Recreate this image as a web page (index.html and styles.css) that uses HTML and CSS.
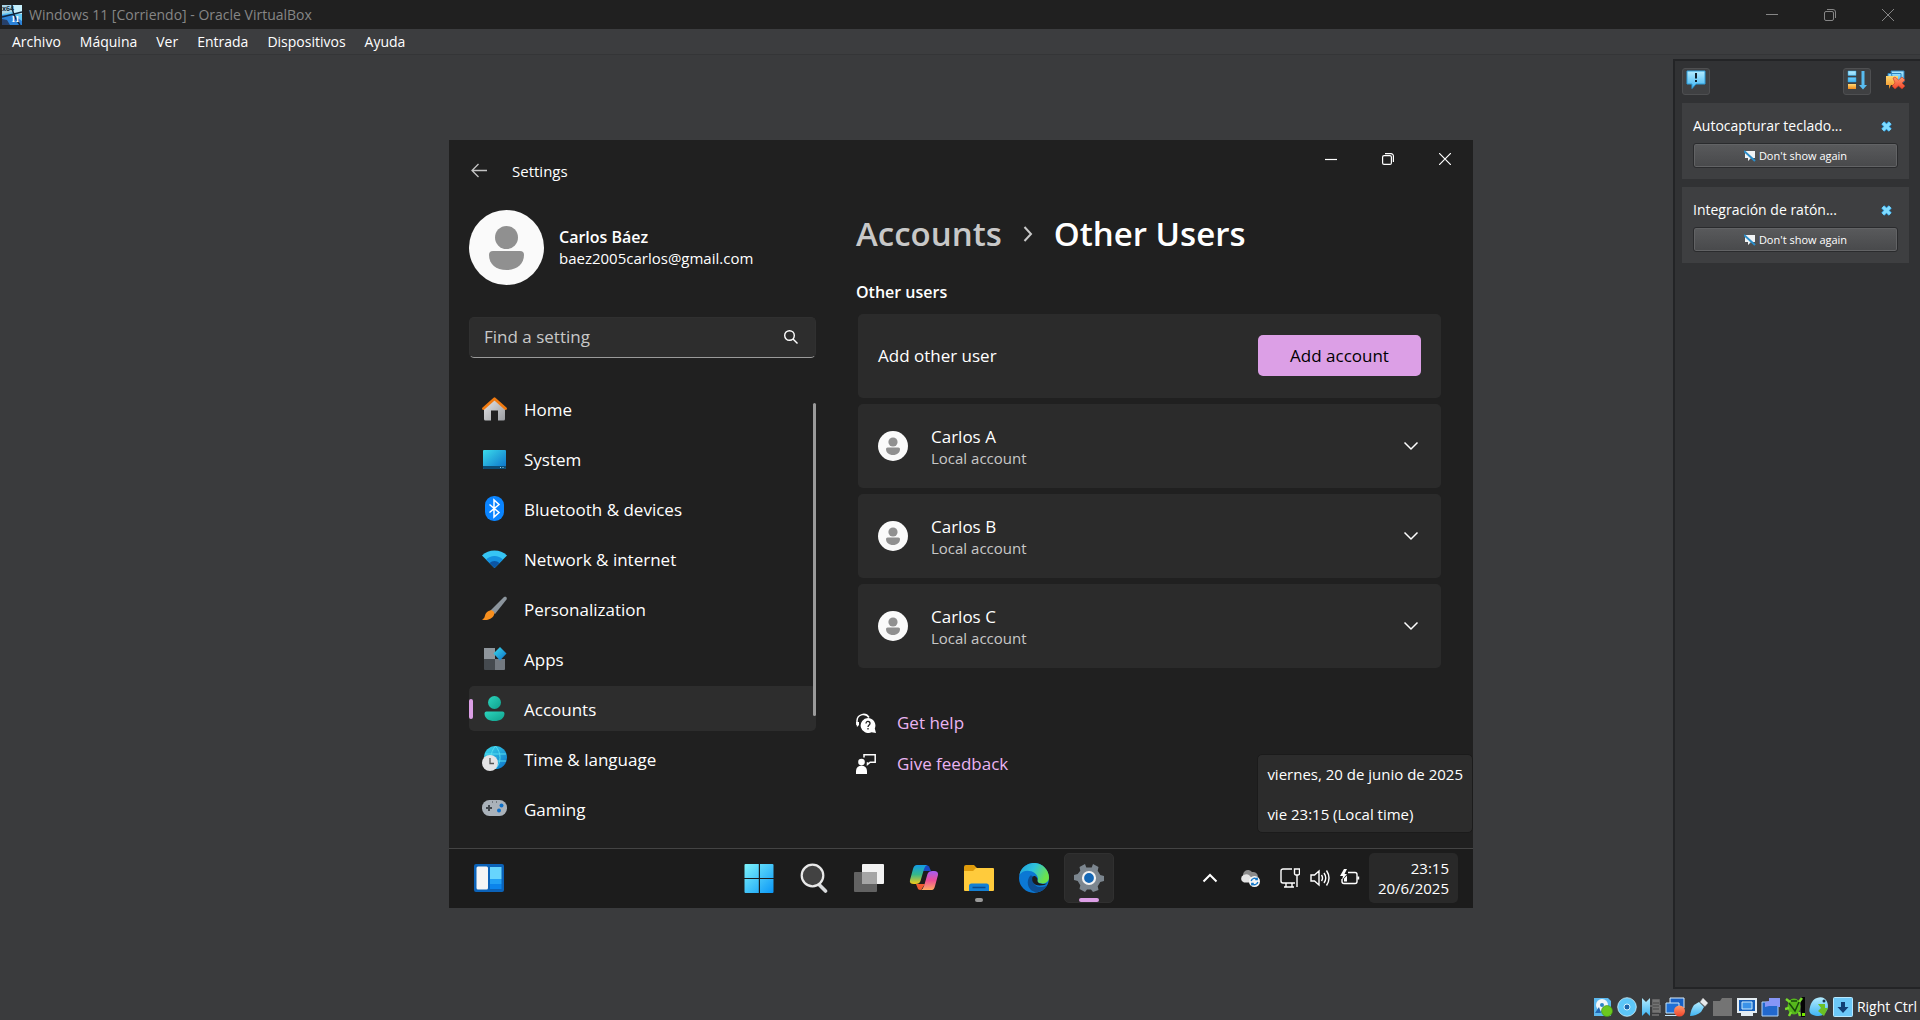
FILE: index.html
```html
<!DOCTYPE html>
<html lang="es">
<head>
<meta charset="utf-8">
<meta name="viewport" content="width=device-width, initial-scale=1">
<title>Windows 11 [Corriendo] - Oracle VirtualBox</title>
<link rel="stylesheet" href="styles.css">
</head>
<body>
<svg class="defs" aria-hidden="true">
  <defs>
    <linearGradient id="sky" x1="0" y1="0" x2="0" y2="1"><stop offset="0" stop-color="#b4ecff"/><stop offset="1" stop-color="#3fb4f2"/></linearGradient>
    <linearGradient id="blue" x1="0" y1="0" x2="1" y2="1"><stop offset="0" stop-color="#3bdcec"/><stop offset="1" stop-color="#0b6fc8"/></linearGradient>
    <linearGradient id="grey" x1="0" y1="0" x2="1" y2="1"><stop offset="0" stop-color="#e6e6e8"/><stop offset="1" stop-color="#9a9ca0"/></linearGradient>
    <linearGradient id="teal" x1="0" y1="0" x2="1" y2="1"><stop offset="0" stop-color="#2cd5bd"/><stop offset="1" stop-color="#0fa08c"/></linearGradient>
    <linearGradient id="orange" x1="0" y1="0" x2="0" y2="1"><stop offset="0" stop-color="#ffd873"/><stop offset="1" stop-color="#f08a1c"/></linearGradient>
    <linearGradient id="red" x1="0" y1="0" x2="0" y2="1"><stop offset="0" stop-color="#ff9a6c"/><stop offset="1" stop-color="#f0442a"/></linearGradient>
    <linearGradient id="start" x1="0" y1="0" x2="1" y2="1"><stop offset="0" stop-color="#7df3fb"/><stop offset="1" stop-color="#0a97f7"/></linearGradient>
    <symbol id="close-blue" viewBox="0 0 12 12"><path d="M2 2 10 10M10 2 2 10" stroke="#2a8fd0" stroke-width="5"/><path d="M2 2 10 10M10 2 2 10" stroke="#7fdcff" stroke-width="3.400"/></symbol>
    <symbol id="mute" viewBox="0 0 12 12"><path d="M1 1h10v7H7l-3 3V8H1z" fill="#f2f4f5"/><path d="M0 1 11 11" stroke="#2a8cc8" stroke-width="2"/></symbol>
    <symbol id="person" viewBox="0 0 75 75"><circle cx="37.5" cy="37.5" r="37.5" fill="#fafafa"/><circle cx="37.5" cy="27.5" r="11.5" fill="#909090"/><path d="M24 41h27a4 4 0 0 1 4 4c0 9-7 15-17.500 15S20 54 20 45a4 4 0 0 1 4-4z" fill="#909090"/></symbol>
    <symbol id="down" viewBox="0 0 16 10"><path d="m1.500 1.500 6.500 6.500 6.500-6.500" fill="none" stroke="#fff" stroke-width="1.500"/></symbol>
  </defs>
</svg>

<header class="titlebar">
  <svg class="app-icon" viewBox="0 0 20 20" aria-hidden="true"><rect width="20" height="20" fill="#64c8f4"/><path d="m0 10 10-1 10 7v4H0z" fill="#2c82d8"/><path d="M0 0h10v7L0 9z" fill="#a8d4e6"/><path d="M10 0h10v9l-9 0z" fill="#c8f0fc"/><path d="m0 14 5 1 3 5H0z" fill="#26406a"/><path d="M10 0c0 6 2 12 8 20M20 7 0 12" stroke="#10263e" stroke-width="1.500" fill="none"/><text x="0" y="6" class="glyph-small">x64</text><text x="9" y="17" class="glyph-bold">11</text></svg>
  <h1 class="app-title">Windows 11 [Corriendo] - Oracle VirtualBox</h1>
  <button class="frame-button" type="button" aria-label="Minimizar"><svg width="12" height="12" viewBox="0 0 12 12"><path d="M0 5.500h12"/></svg></button>
  <button class="frame-button" type="button" aria-label="Restaurar"><svg width="12" height="12" viewBox="0 0 12 12"><rect x=".5" y="2.500" width="9" height="9" rx="1.500"/><path d="M3 .500h6a2.500 2.500 0 0 1 2.500 2.500v6"/></svg></button>
  <button class="frame-button" type="button" aria-label="Cerrar"><svg width="12" height="12" viewBox="0 0 12 12"><path d="m0 0 12 12M12 0 0 12"/></svg></button>
</header>

<nav class="menubar" aria-label="Menú">
  <button type="button">Archivo</button><button type="button">Máquina</button><button type="button">Ver</button><button type="button">Entrada</button><button type="button">Dispositivos</button><button type="button">Ayuda</button>
</nav>

<div class="stage">
  <div class="guest">
    <section class="settings">
      <header class="settings-bar">
        <button class="back" type="button" aria-label="Back"><svg width="17" height="15" viewBox="0 0 17 15"><path d="M16 7.500H1M7.500 1 1 7.500 7.500 14" fill="none" stroke="#c4c4c4" stroke-width="1.300"/></svg></button>
        <h2>Settings</h2>
        <div class="settings-controls">
          <button type="button" aria-label="Minimize"><svg width="12" height="12" viewBox="0 0 12 12"><path d="M0 6.500h12"/></svg></button>
          <button type="button" aria-label="Restore"><svg width="12" height="12" viewBox="0 0 12 12"><rect x=".6" y="2.600" width="8.800" height="8.800" rx="1.500"/><path d="M3 .600h6a2.400 2.400 0 0 1 2.400 2.400v6"/></svg></button>
          <button type="button" aria-label="Close"><svg width="12" height="12" viewBox="0 0 12 12"><path d="m0 0 12 12M12 0 0 12"/></svg></button>
        </div>
      </header>
      <div class="settings-body">
        <aside class="side">
          <div class="profile">
            <svg class="profile-pic" aria-hidden="true"><use href="#person"/></svg>
            <div><strong>Carlos Báez</strong><span>baez2005carlos@gmail.com</span></div>
          </div>
          <label class="search">
            <input type="text" placeholder="Find a setting" aria-label="Find a setting">
            <svg width="14" height="14" viewBox="0 0 14 14" aria-hidden="true"><circle cx="5.500" cy="5.500" r="4.800"/><path d="m9 9 4.500 4.500"/></svg>
          </label>
          <nav class="nav" aria-label="Settings">
            <a href="#home"><svg viewBox="0 0 25 25"><path d="M2 12 12.500 3 23 12v11a1.500 1.500 0 0 1-1.500 1.500H16v-10H9v10H3.500A1.500 1.500 0 0 1 2 23z" fill="url(#grey)"/><path d="M1.500 12.500 12.500 2.800l11 9.700" fill="none" stroke="#f07a10" stroke-width="2.800" stroke-linejoin="round" stroke-linecap="round"/></svg>Home</a>
            <a href="#system"><svg viewBox="0 0 25 25"><rect x="1" y="4" width="23" height="19" rx="1" fill="url(#blue)"/><path d="M1 20h23v2a1 1 0 0 1-1 1H2a1 1 0 0 1-1-1z" fill="#0c4c74"/><path d="M18 21.500h1m1.500 0h1" stroke="#9bd8f0"/></svg>System</a>
            <a href="#bluetooth"><svg viewBox="0 0 25 25"><rect x="3" width="19" height="25" rx="9" fill="#0a84ff"/><path d="m7.500 8.500 9.500 8-5 4.500V4l5 4.500-9.500 8" fill="none" stroke="#fff" stroke-width="1.500"/></svg>Bluetooth &amp; devices</a>
            <a href="#network"><svg viewBox="0 0 25 25"><path d="M0 9.500a18 18 0 0 1 25 0L12.500 22z" fill="#36c5f4"/><path d="M4 13.500a12 12 0 0 1 17 0L12.500 22z" fill="#1490df"/><path d="M7.500 17a7.500 7.500 0 0 1 10 0l-5 5z" fill="#0b55a4"/></svg>Network &amp; internet</a>
            <a href="#personalization"><svg viewBox="0 0 25 25"><path d="M22 1c2-1 3.500.500 2.500 2.500L13 18l-4.500-3.500z" fill="#8c959d"/><path d="M8 14.500c2-1 5.500 1.500 4 4.500-2 4.500-8 6-12 4.500 3-1 2.500-3 3.500-5.500 1-2 2.500-3 4.500-3.500z" fill="#f78f1e"/></svg>Personalization</a>
            <a href="#apps"><svg viewBox="0 0 25 25"><path d="M2 2h11v11H2z" fill="#8f969c"/><path d="M2 13h11v11H3a1 1 0 0 1-1-1z" fill="#454a4f"/><path d="M13 13h10v10a1 1 0 0 1-1 1h-9z" fill="#737980"/><path d="m18 1 6.500 6.500L18 14.500 11.500 7.500z" fill="url(#blue)"/></svg>Apps</a>
            <a href="#accounts" class="current" aria-current="page"><svg viewBox="0 0 25 25"><circle cx="12.500" cy="6.500" r="6.500" fill="url(#teal)"/><path d="M4.500 15.500h16a2 2 0 0 1 2 2c0 5-4.500 7.500-10 7.500s-10-2.500-10-7.500a2 2 0 0 1 2-2z" fill="url(#teal)"/></svg>Accounts</a>
            <a href="#time"><svg viewBox="0 0 25 25"><circle cx="13.500" cy="11.500" r="11.500" fill="url(#blue)"/><path d="M3 8h21M3 15h21M13.500 0c-6 7-6 16 0 23 6-7 6-16 0-23z" fill="none" stroke="#54dcf0" stroke-width="1"/><circle cx="8" cy="17" r="8" fill="#e4e4e6"/><path d="M8 12v5.500h4" fill="none" stroke="#555" stroke-width="1.300"/></svg>Time &amp; language</a>
            <a href="#gaming"><svg viewBox="0 0 25 25"><rect y="4" width="25" height="16" rx="7.500" fill="#aab2ba"/><path d="M4 12h6M7 9v6" stroke="#40464c" stroke-width="2"/><circle cx="19.500" cy="9.500" r="2" fill="#0e70c8"/><circle cx="17" cy="14.500" r="2" fill="#0e70c8"/><path d="M10 6h1m3 0h1" stroke="#40464c"/></svg>Gaming</a>
          </nav>
        </aside>
        <main class="page">
          <h2 class="crumbs"><a href="#accounts">Accounts</a><svg width="10" height="16" viewBox="0 0 10 16" aria-hidden="true"><path d="m1.500 1 6.500 7-6.500 7" fill="none" stroke="#c8c8c8" stroke-width="2"/></svg><span>Other Users</span></h2>
          <h3>Other users</h3>
          <div class="cards">
            <div class="card"><span class="card-name">Add other user</span><button class="accent" type="button">Add account</button></div>
            <button class="card" type="button" aria-expanded="false"><svg class="face"><use href="#person"/></svg><span class="who"><span class="card-name">Carlos A</span><small>Local account</small></span><svg class="chevron"><use href="#down"/></svg></button>
            <button class="card" type="button" aria-expanded="false"><svg class="face"><use href="#person"/></svg><span class="who"><span class="card-name">Carlos B</span><small>Local account</small></span><svg class="chevron"><use href="#down"/></svg></button>
            <button class="card" type="button" aria-expanded="false"><svg class="face"><use href="#person"/></svg><span class="who"><span class="card-name">Carlos C</span><small>Local account</small></span><svg class="chevron"><use href="#down"/></svg></button>
          </div>
          <div class="links">
            <a href="#help"><svg viewBox="0 0 20 20"><path d="M1 12V7.500a6.500 6.500 0 0 1 12-3" fill="none" stroke="#fff" stroke-width="1.500"/><path d="M0 9h3v3l-2 2z" fill="#fff"/><path d="M12 5a7.500 7.500 0 0 1 6.800 10.500L20 20l-4.500-.8A7.500 7.500 0 1 1 12 5z" fill="#fff"/><path d="M10 10.500c0-3 4-2.500 4 0 0 1.500-2 1.500-2 3.500m0 1v1.500" fill="none" stroke="#202020" stroke-width="1.300"/></svg>Get help</a>
            <a href="#feedback"><svg viewBox="0 0 20 20"><circle cx="5.500" cy="8" r="3.300" fill="#fff"/><path d="M0 20v-3a5.500 5.500 0 0 1 11 0v3z" fill="#fff"/><path d="M8 3.500V.8h11.200v7.400h-5l-2.700 2.300V8.200" fill="none" stroke="#fff" stroke-width="1.500"/></svg>Give feedback</a>
          </div>
        </main>
      </div>
      <div class="tooltip" role="tooltip"><p>viernes, 20 de junio de 2025</p><p>vie 23:15 (Local time)</p></div>
    </section>

    <footer class="taskbar">
      <button class="task" type="button" aria-label="Widgets"><svg viewBox="0 0 30 30"><rect y="1" width="30" height="28" rx="2" fill="#0b62b8"/><rect x="2.500" y="3.500" width="11.500" height="23" rx="1.500" fill="#f5f5f5"/><path d="M16 4h11.500v12H16z" fill="#67d5fd"/><path d="M16 16h11.500v5H16z" fill="#20a0f5"/><path d="M16 21h11.500v5H16z" fill="#0b84ec"/></svg></button>
      <div class="pinned">
        <button class="task" type="button" aria-label="Start"><svg viewBox="0 0 30 30"><path d="M1.500 1H14.800v14H.5V2a1 1 0 0 1 1-1zM16 1h12.500a1 1 0 0 1 1 1v13H16zM.5 16H14.800v14H1.500a1 1 0 0 1-1-1zM16 16h13.500v13a1 1 0 0 1-1 1H16z" fill="url(#start)"/></svg></button>
        <button class="task" type="button" aria-label="Search"><svg viewBox="0 0 30 30"><path d="m19.500 21 7 7" stroke="#d8dadc" stroke-width="3.600" stroke-linecap="round"/><circle cx="13.500" cy="12.500" r="10.800" fill="#424242" stroke="#e9e9e9" stroke-width="2.200"/></svg></button>
        <button class="task" type="button" aria-label="Task view"><svg viewBox="0 0 30 30"><rect y="9" width="23" height="20" rx="1" fill="#626262"/><rect x="8" y="1" width="22" height="20" rx="1" fill="#f2f2f2"/><path d="M8 9h15v12H8z" fill="#a5a5a5"/></svg></button>
        <button class="task" type="button" aria-label="Copilot"><svg viewBox="0 0 30 30"><defs><linearGradient id="cp1" x1="0" y1="0" x2="0" y2="1"><stop offset="0" stop-color="#129be6"/><stop offset=".5" stop-color="#35b88a"/><stop offset="1" stop-color="#f5ca18"/></linearGradient><linearGradient id="cp2" x1="0" y1="0" x2="0" y2="1"><stop offset="0" stop-color="#a45cf5"/><stop offset=".5" stop-color="#ec4f96"/><stop offset="1" stop-color="#ffaa60"/></linearGradient></defs><path d="M18 8h4L20 3.500Q19 2 17 2l-5 6z" fill="#1848c4"/><path d="M8 2h10q-2 1-3 4l-3.500 12q-1 3-5 3H5q-5 0-4-4L4 6q1-4 4-4z" fill="url(#cp1)"/><path d="M12 21H7l2 5q.5 1 3 1l4-6z" fill="#f15a30"/><path d="M23 27H12q2-1 3-4l3.500-12q1-3 5-3h1.500q4.500 0 4 4l-3 11q-1 4-3 4z" fill="url(#cp2)"/></svg></button>
        <button class="task running" type="button" aria-label="File Explorer"><svg viewBox="0 0 30 30"><path d="M0 4a2 2 0 0 1 2-2h8l3 3h15v6H0z" fill="#df9b0b"/><path d="M12 5h17a1 1 0 0 1 1 1v21a1 1 0 0 1-1 1H1a1 1 0 0 1-1-1V8h9z" fill="#ffcb3c"/><path d="M5 28v-5a2.500 2.500 0 0 1 2.500-2.500h15A2.500 2.500 0 0 1 25 23v5z" fill="#1480d4"/><path d="M8.500 24.500h13" stroke="#0b4a8c" stroke-width="1.500"/></svg></button>
        <button class="task" type="button" aria-label="Edge"><svg viewBox="0 0 30 30"><defs><linearGradient id="ed" x1="0" y1="0" x2="1" y2=".4"><stop offset="0" stop-color="#209fd8"/><stop offset=".5" stop-color="#2ec2de"/><stop offset="1" stop-color="#6be34a"/></linearGradient></defs><circle cx="15" cy="15" r="15" fill="#0b78d4"/><path d="M.3 12A15 15 0 0 1 30 14.500c0 4-3.500 6-6.500 6-4.500 0-6.500-2-4.500-4.500C19 8 5 4 .3 12z" fill="url(#ed)"/><path d="M11 13c-6 8 1 19 10 15.500 3-1 5.500-3.500 7-6-8 4-15 0-14-7.500.3-2-1.500-3-3-2z" fill="#0d4f94"/><path d="M13.500 14c-1.500 5 2.500 8.500 7 8.500 4 0 6-1 7.500-2-3 1-10 .5-9.500-3 .5-3-3-6-5-3.500z" fill="#1c1c1c"/></svg></button>
        <button class="task active" type="button" aria-label="Settings"><svg viewBox="0 0 30 30"><path d="m11 1 1.300 3.500h5.400L19 1l5.500 3-.8 3.700 2.600 4.300 3.700 1v5l-3.700 1-2.600 4.300.8 3.700L19 29l-2-2.500h-4L11 29l-5.500-3 .8-3.700L3.700 18 0 17v-5l3.700-1 2.600-3.300L5.500 4z" fill="#7c868f"/><circle cx="15" cy="15" r="6" fill="#1467b5" stroke="#f2f2f2" stroke-width="2.200"/></svg></button>
      </div>
      <div class="tray">
        <button type="button" class="more" aria-label="Hidden icons"><svg width="16" height="10" viewBox="0 0 16 10"><path d="m1.500 8.500 6.500-6.500 6.500 6.500" fill="none" stroke="#fff" stroke-width="2"/></svg></button>
        <button type="button" class="cloud" aria-label="OneDrive"><svg width="20" height="20" viewBox="0 0 20 20"><path d="M4 10a5 5 0 0 1 8-6 5 5 0 0 1 6 5v4H6z" fill="#8b8b8b"/><path d="M4 14.500A4 4 0 0 1 3.500 7c4-2 6 0 8 3v4.500z" fill="#e4e4e4"/><circle cx="14.500" cy="13.500" r="5.500" fill="#f6f6f6"/><path d="M11.200 13a3.400 3.400 0 0 1 6-1.500m.6 2.500a3.400 3.400 0 0 1-6 1.500m5.400-6v2h-2m-3.400 6v-2h2" fill="none" stroke="#1678c8" stroke-width="1.400"/></svg></button>
        <button type="button" class="quick" aria-label="Network, volume, battery">
          <svg width="20" height="20" viewBox="0 0 20 20"><path d="M12 1H3a2 2 0 0 0-2 2v10a2 2 0 0 0 2 2h12M6 15v4m6-4v4M4 19h10M14.500 1h5v4.500a1.500 1.500 0 0 1-1.500 1.500h-2a1.500 1.500 0 0 1-1.500-1.500zM17 7v12"/></svg>
          <svg width="20" height="20" viewBox="0 0 20 20"><path d="M1 7h3.500L9 3v14l-4.500-4H1zM11.500 7q2 3 0 6M14 5q3.500 5 0 10M16.500 2.500q5 7.500 0 15"/></svg>
          <svg width="20" height="20" viewBox="0 0 20 20"><path d="M8 4.500h7a2 2 0 0 1 2 2v7a2 2 0 0 1-2 2H4a2 2 0 0 1-2-2V11M18.500 8.500v3"/><path d="M4 1 0 8h3L2 12l5-6H4.500L7 1zM4 13.500v-3l3-3v6z" fill="#fff" stroke="none"/></svg>
        </button>
        <button type="button" class="clock"><time>23:15</time><time>20/6/2025</time></button>
      </div>
    </footer>
  </div>

  <aside class="notices" aria-label="Notificaciones">
    <div class="notices-tools">
      <button type="button" class="tool pressed" aria-label="Mostrar"><svg viewBox="0 0 20 20"><path d="M1 1h18v13h-9l-4 4.500V14H1z" fill="url(#sky)" stroke="#2f9cd8"/><path d="M10 3v5.500m0 1.500v2" stroke="#10202c" stroke-width="2"/></svg></button>
      <button type="button" class="tool pressed push" aria-label="Ordenar"><svg viewBox="0 0 20 20"><path d="M1 1h8v4.500H1zM1 7.500h8V12H1z" fill="url(#sky)" stroke="#2f9cd8" stroke-width=".5"/><path d="M1 14h8v5H1z" fill="url(#orange)"/><path d="M14.500 1h3v14h2.500l-4 4.500-4-4.500h2.500z" fill="#58bcf0"/></svg></button>
      <button type="button" class="tool" aria-label="Borrar todo"><svg viewBox="0 0 20 20"><path d="M6 1h13v11H8zM3 3.500h13v9H3z" fill="url(#sky)" stroke="#2f84c0"/><path d="M1 6h12v9H6l-2 4v-4H1z" fill="url(#orange)"/><path d="m8 8 2-1 3.500 3L17 7l3 3-3 3 3 3-3 3-3.500-3L10 19l-3-3 3-3z" fill="url(#red)" stroke="#c03a24" stroke-width=".6"/></svg></button>
    </div>
    <article class="notice">
      <div class="notice-head"><h2>Autocapturar teclado...</h2><button type="button" aria-label="Cerrar"><svg width="11" height="11"><use href="#close-blue"/></svg></button></div>
      <button type="button" class="hush"><svg width="12" height="12"><use href="#mute"/></svg>Don't show again</button>
    </article>
    <article class="notice">
      <div class="notice-head"><h2>Integración de ratón...</h2><button type="button" aria-label="Cerrar"><svg width="11" height="11"><use href="#close-blue"/></svg></button></div>
      <button type="button" class="hush"><svg width="12" height="12"><use href="#mute"/></svg>Don't show again</button>
    </article>
  </aside>
</div>

<footer class="statusbar">
  <svg viewBox="0 0 20 20"><path d="M1 1h14l3 3v15H1z" fill="#5cb8ee"/><circle cx="9" cy="8" r="6" fill="#f2f6f8"/><circle cx="9" cy="8" r="2" fill="#2c84c4"/><path d="m6 10-4 6h6z" fill="#2268b4"/><circle cx="14" cy="14" r="5.500" fill="#6cc81e" stroke="#3e8c10" stroke-width=".6"/></svg>
  <svg viewBox="0 0 20 20"><circle cx="10" cy="10" r="9.300" fill="#5cc6f8" stroke="#cdf1ff" stroke-width=".8"/><circle cx="10" cy="10" r="3" fill="#1b64ac" stroke="#d6f4ff"/></svg>
  <svg viewBox="0 0 20 20"><path d="M1 1l4 4 4-4v18l-4-4-4 4z" fill="url(#sky)"/><path d="M12 3h6v12h-6zM9 9h2m0 9h7M19 8v8" fill="#747474" stroke="#747474" stroke-width="1.500"/><path d="M12 6h6m-6 3h6m-6 3h6" stroke="#444"/></svg>
  <svg viewBox="0 0 20 20"><path d="M5 1h14v10H5z" fill="#1760c4" stroke="#dceffc"/><path d="M1 6h13v10H1zM0 18.500h12" fill="#1f70d4" stroke="#c6e6fa"/><circle cx="14.500" cy="14" r="5.500" fill="url(#red)"/></svg>
  <svg viewBox="0 0 20 20"><path d="m14 1 5 5-3 3.500L11 5z" fill="#e8eaec" stroke="#999" stroke-width=".5"/><path d="m10 5 5 5-3 5q-5 4-11 4 1-7 4-11z" fill="url(#sky)"/></svg>
  <svg viewBox="0 0 20 20"><path d="M0 4h7l2-3h10v18H0z" fill="#747474"/></svg>
  <svg viewBox="0 0 20 20"><path d="M0 1h20v15h-4v3H4v-3H0z" fill="#e4ecf2"/><path d="M2 3h16v11H2z" fill="#1660bc"/><path d="M5 5h10v7H5z" fill="#3a92e8" stroke="#c8e8fc"/></svg>
  <svg viewBox="0 0 20 20"><path d="M1 5h16v14H1z" fill="#2268cc" stroke="#b4d6f8"/><path d="M8 1h11v9h-2l-1-1H8L4 10V5l4-1z" fill="#8796f6"/></svg>
  <svg viewBox="0 0 20 20"><path d="M16 0h4v20h-4z" fill="#050505"/><ellipse cx="9" cy="9.500" rx="6.500" ry="8" fill="#56b81c"/><path d="m1 2 4 3M17 1l-3 4M0 12l4-1M4 19l2-4m8 0 1 4" stroke="#78dc2c" stroke-width="2.500"/><path d="m4 6 6 8 4-9M6 4h6" stroke="#17480c" stroke-width="1.500" fill="none"/><path d="M17 16h3v3h-3z" fill="#78e800"/></svg>
  <svg viewBox="0 0 20 20"><path d="M8 1c7-3 11 3 11 8s-5 11-11 10S-1 16 1 10c1-4 3-8 7-9z" fill="url(#sky)"/><path d="M9 7h7v4h3l-4 8-6-5 3-3z" fill="#6cc024"/><circle cx="15" cy="4" r="1.500" fill="#17384c"/></svg>
  <svg viewBox="0 0 20 20"><rect x=".5" y=".5" width="19" height="19" rx="1" fill="#6cc8f8" stroke="#b8e8ff"/><path d="M8 5h4v5h3.500L10 16l-5.500-6H8z" fill="#123e74"/></svg>
  <span>Right Ctrl</span>
</footer>
</body>
</html>
```
FILE: styles.css
```css
* { box-sizing: border-box; }

body {
  margin: 0;
  min-height: 100vh;
  display: flex;
  flex-direction: column;
  background: #3a3b3d;
  color: #fff;
  font-family: "Open Sans", "Noto Sans", sans-serif;
  font-size: 14px;
  line-height: 20px;
}

h1, h2, h3, p { margin: 0; font-size: inherit; font-weight: 400; }
button { padding: 0; border: 0; background: none; color: inherit; font: inherit; }
a { color: inherit; text-decoration: none; }
svg { display: block; flex: none; }
.defs { position: absolute; width: 0; height: 0; }

/* Host window frame */
.titlebar {
  display: flex;
  align-items: center;
  height: 29px;
  padding: 0 3px 0 2px;
  background: #202020;
  color: #868686;
}
.app-icon { width: 20px; height: 20px; margin-right: 7px; }
.glyph-small { font: 700 7px "Open Sans", sans-serif; fill: #1c3040; }
.glyph-bold { font: 700 9px "Liberation Serif", serif; fill: #fff; }
.app-title { flex: 1; }
.frame-button { width: 58px; height: 29px; display: grid; place-items: center; }
.frame-button svg { fill: none; stroke: #868686; }

.menubar {
  display: flex;
  gap: 1px;
  height: 26px;
  padding-left: 3px;
  background: #3c3d3f;
  border-bottom: 1px solid #343537;
}
.menubar button { padding: 0 9px; }

.stage {
  position: relative;
  flex: 1;
  display: grid;
  place-items: center;
  padding: 8px 6px 10px 8px;
}

/* Guest desktop */
.guest {
  width: 100%;
  max-width: 1024px;
  background: #202020;
  font-size: 15px;
}
.settings {
  position: relative;
  display: flex;
  flex-direction: column;
  min-height: 708px;
}
.settings-bar { display: flex; align-items: center; height: 62px; padding-left: 22px; }
.back { width: 17px; margin-right: 24px; }
.settings-controls { display: flex; align-self: flex-start; margin-left: auto; }
.settings-controls button { width: 57px; height: 38px; display: grid; place-items: center; }
.settings-controls svg { fill: none; stroke: #fff; stroke-width: 1.2; }

.settings-body { display: grid; grid-template-columns: 347px minmax(0, 1fr); gap: 40px; padding: 0 32px 0 20px; }

.profile { display: flex; align-items: center; gap: 15px; margin-top: 8px; line-height: 21px; }
.profile-pic { width: 75px; height: 75px; }
.profile strong, .profile span { display: block; }
.profile strong { padding-top: 2px; font-size: 16px; font-weight: 600; }

.search {
  display: flex;
  align-items: center;
  height: 41px;
  margin: 32px 0 28px;
  padding: 0 17px 0 14px;
  background: #2d2d2d;
  border: 1px solid #303030;
  border-bottom-color: #9a9a9a;
  border-radius: 5px;
}
.search input { flex: 1; min-width: 0; padding: 0; border: 0; background: none; color: #fff; font: inherit; font-size: 17px; outline: 0; }
.search input::placeholder { color: #c8c8c8; opacity: 1; }
.search svg { fill: none; stroke: #fff; stroke-width: 1.4; }

.nav { position: relative; display: grid; gap: 5px; font-size: 17px; }
.nav a { position: relative; display: flex; align-items: center; gap: 17px; height: 45px; padding: 3px 0 0 13px; border-radius: 5px; }
.nav a svg { width: 25px; height: 25px; margin-bottom: 3px; }
.nav .current { background: #2d2d2d; }
.nav .current::before { content: ""; position: absolute; left: 0; top: 13px; width: 4px; height: 20px; border-radius: 2px; background: #dc9fe6; }
.nav::after { content: ""; position: absolute; right: 0; top: 17px; bottom: 115px; width: 3px; border-radius: 2px; background: #9a9a9a; }

.crumbs { display: flex; align-items: center; gap: 21px; height: 44px; margin-top: 10px; font-size: 33px; font-weight: 600; }
.crumbs a { color: #c8c8c8; }
.page h3 { margin: 26px 0 12px; font-size: 16px; font-weight: 600; }
.cards { display: grid; gap: 6px; padding-left: 2px; }
.card {
  display: flex;
  align-items: center;
  width: 100%;
  height: 84px;
  padding: 0 20px;
  background: #2b2b2b;
  border-radius: 5px;
  text-align: left;
}
.card-name { font-size: 17px; }
.accent { width: 163px; height: 41px; margin-left: auto; border-radius: 5px; background: #dc9fe6; color: #000; font-size: 17px; }
.face { width: 30px; height: 30px; margin-right: 23px; }
.who { display: grid; gap: 1px; padding-top: 3px; }
.who small { font-size: 15px; color: #c8c8c8; }
.chevron { width: 16px; height: 10px; margin-left: auto; margin-right: 2px; }

.links { display: grid; justify-items: start; gap: 21px; margin-top: 45px; font-size: 17px; color: #eab4f2; }
.links a { display: flex; align-items: center; gap: 21px; }
.links svg { width: 20px; height: 20px; }

.tooltip {
  position: absolute;
  right: 0;
  bottom: 15px;
  display: grid;
  gap: 20px;
  padding: 9px 9px 8px;
  background: #2c2c2c;
  border: 1px solid #1b1b1b;
  border-radius: 5px;
}

.taskbar {
  display: grid;
  grid-template-columns: minmax(50px, 270px) auto 1fr;
  align-items: center;
  height: 60px;
  padding: 0 15px 1px;
  background: #1c1c1c;
  border-top: 1px solid #444;
}
.task { position: relative; width: 50px; height: 50px; display: grid; place-items: center; border-radius: 5px; }
.task svg { width: 30px; height: 30px; }
.pinned { display: flex; gap: 5px; }
.active { background: #2a2a2a; border: 1px solid #303030; }
.running::after, .active::after { content: ""; position: absolute; left: 50%; bottom: 1px; height: 4px; border-radius: 2px; transform: translateX(-50%); }
.running::after { width: 8px; background: #9a9a9a; }
.active::after { bottom: 0; width: 20px; background: #dc9fe6; }
.tray { display: flex; align-items: center; justify-content: flex-end; }
.more { margin-right: 22px; }
.cloud { margin-right: 20px; }
.quick { display: flex; gap: 10px; margin-right: 9px; }
.quick svg { fill: none; stroke: #fff; stroke-width: 1.4; }
.clock { display: grid; height: 50px; align-content: center; padding: 0 9px; text-align: right; border-radius: 5px; background: #292929; }

/* Notification center */
.notices {
  position: absolute;
  top: 4px;
  right: 0;
  bottom: 5px;
  width: 247px;
  padding: 7px 11px 0 7px;
  background: #313234;
  border: 1px solid #232426;
  border-width: 2px 0 2px 2px;
}
.notices-tools { display: flex; margin-bottom: 8px; gap: 10px; }
.tool { width: 28px; height: 27px; display: grid; place-items: center; border: 1px solid transparent; border-radius: 3px; }
.tool svg { width: 20px; height: 20px; margin-bottom: 4px; }
.pressed { background: #3f4042; border-color: #4e4f51; }
.push { margin-left: auto; }
.notice { height: 76px; margin-bottom: 8px; padding: 13px 11px 0; background: #3e3f41; }
.notice-head { display: flex; align-items: center; justify-content: space-between; margin-bottom: 7px; padding-right: 6px; }
.hush {
  display: flex;
  align-items: center;
  justify-content: center;
  gap: 3px;
  width: 100%;
  height: 25px;
  border: 1px solid #2a2b2d;
  border-radius: 3px;
  background: linear-gradient(#595a5c, #48494b);
  box-shadow: inset 0 0 0 1px #626365;
  font-size: 11px;
}

.statusbar { display: flex; align-items: center; justify-content: flex-end; gap: 4px; height: 26px; padding-right: 3px; }
.statusbar svg { width: 20px; height: 20px; }
```
